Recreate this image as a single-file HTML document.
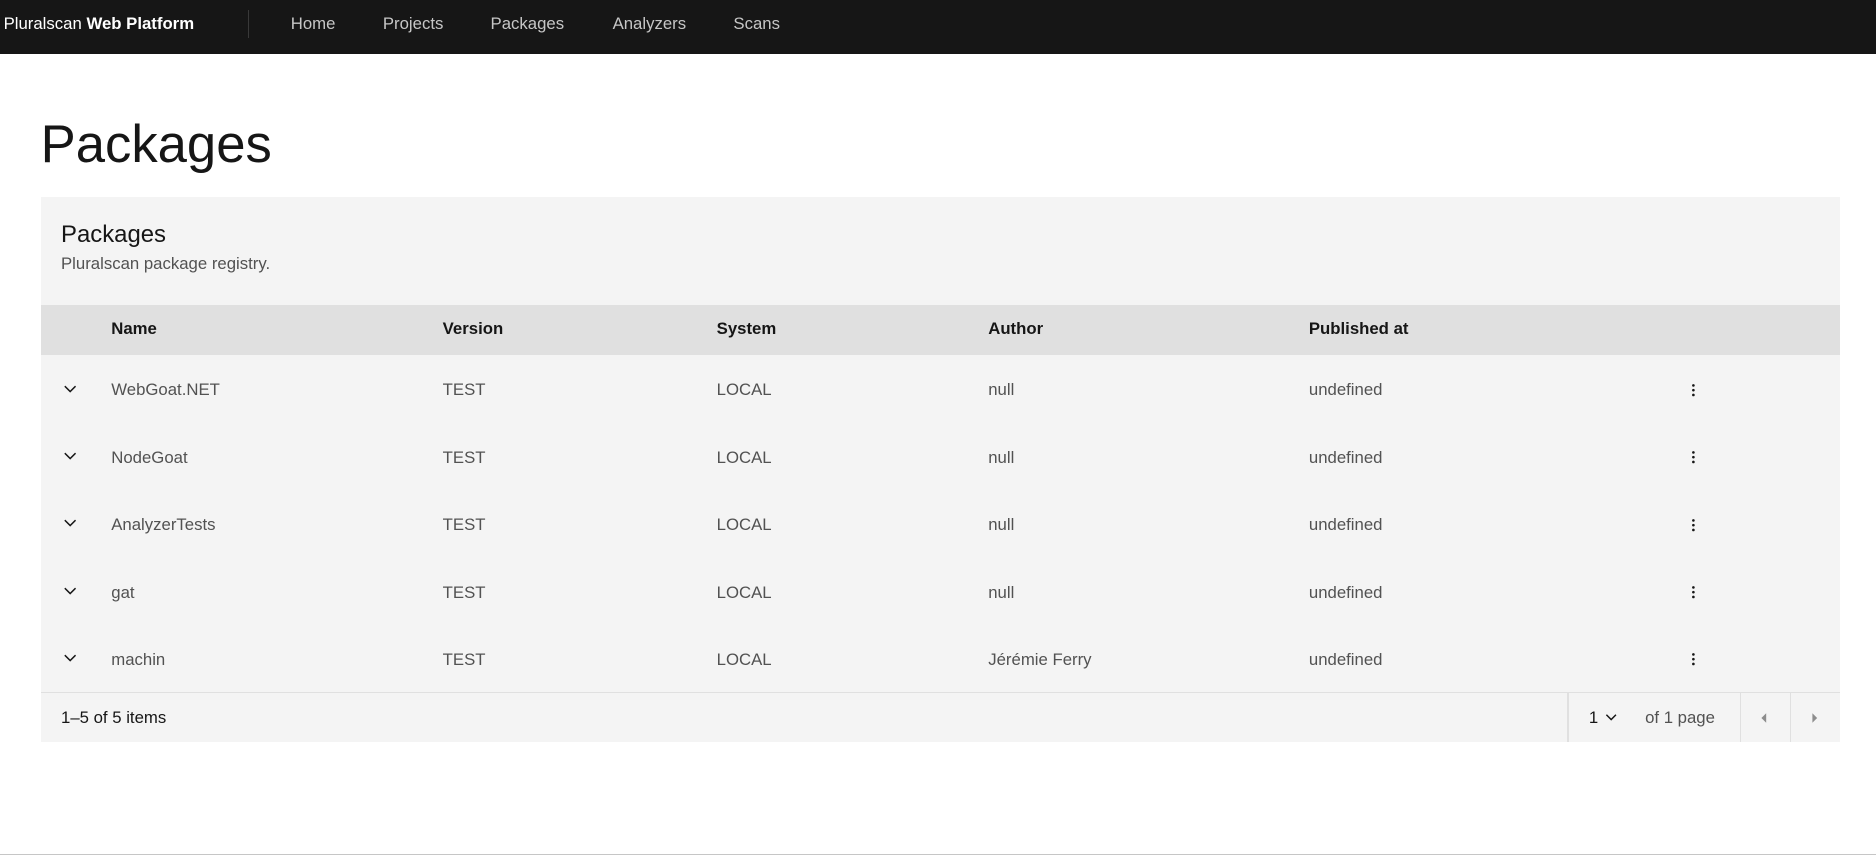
<!DOCTYPE html>
<html><head><meta charset="utf-8"><style>
html,body{margin:0;padding:0;background:#fff;overflow:hidden}
#w{zoom:1.19643;width:1568px;height:716px;position:relative;font-family:"Liberation Sans",Arial,sans-serif;color:#161616}
.nav{position:absolute;left:0;top:0;width:1568px;height:45px;background:#161616}
.nav .b{position:absolute;left:3px;top:12px;font-size:14px;color:#fff}
.nav .d{position:absolute;left:207px;top:8px;width:1px;height:24px;background:#393939}
.nav a{position:absolute;top:12px;font-size:14px;color:#c6c6c6;text-decoration:none}
h1{position:absolute;left:34px;top:95px;margin:0;font-size:44px;font-weight:300;color:#161616}
.c{position:absolute;left:34px;top:165px;width:1504px;height:455px;background:#f4f4f4}
.t{position:absolute;left:17px;top:20px;font-size:20px}
.s{position:absolute;left:17px;top:47px;font-size:14px;color:#525252}
.hd{position:absolute;left:0;top:90px;width:1504px;height:42px;background:#e0e0e0}
.cell{position:absolute;font-size:14px;color:#525252;white-space:nowrap}
.hd .cell{color:#161616;font-weight:bold;top:12px}
.ft{position:absolute;left:0;top:413px;width:1504px;height:42px;border-top:1px solid #e0e0e0;box-sizing:border-box}
.vl{position:absolute;top:0;width:1px;height:41px;background:#e0e0e0}
</style></head><body><div id="w">
<div class="nav"><div class="b">Pluralscan <b>Web Platform</b></div><div class="d"></div>
<a style="left:243px">Home</a><a style="left:320px">Projects</a><a style="left:410px">Packages</a><a style="left:512px">Analyzers</a><a style="left:613px">Scans</a></div>
<h1>Packages</h1>
<div class="c">
<div class="t">Packages</div><div class="s">Pluralscan package registry.</div>
<div class="hd"><div class="cell" style="left:59px">Name</div><div class="cell" style="left:336px">Version</div><div class="cell" style="left:565px">System</div><div class="cell" style="left:792px">Author</div><div class="cell" style="left:1060px">Published at</div></div>
<div id="rows"></div>
<div class="ft">
<div class="cell" style="left:17px;top:13px;color:#161616">1–5 of 5 items</div>
<div class="vl" style="left:1276px"></div><div class="vl" style="left:1420px"></div><div class="vl" style="left:1462px"></div>
<div class="cell" style="left:1294px;top:13px;color:#161616">1</div>
<svg style="position:absolute;left:1307px;top:15px" width="12" height="12" viewBox="0 0 12 12"><path d="M2 4l4 4 4-4" fill="none" stroke="#161616" stroke-width="1.2"/></svg>
<div class="cell" style="left:1341px;top:13px">of 1 page</div>
<svg style="position:absolute;left:1436px;top:16px" width="8" height="10"><path d="M6 1v8L2 5z" fill="#8d8d8d"/></svg>
<svg style="position:absolute;left:1479px;top:16px" width="8" height="10"><path d="M2 1v8l4-4z" fill="#8d8d8d"/></svg>
</div>
</div>
<div style="position:absolute;left:0;top:714px;width:1568px;height:1px;background:#c6c6c6"></div>
</div>
<script>
var d=[["WebGoat.NET","null"],["NodeGoat","null"],["AnalyzerTests","null"],["gat","null"],["machin","Jérémie Ferry"]],h="";
d.forEach(function(r,i){var y=132+i*56.3+21;
h+='<svg style="position:absolute;left:19px;top:'+(y+1)+'px" width="12" height="12" viewBox="0 0 12 12"><path d="M1.5 3.5l4.5 4.5 4.5-4.5" fill="none" stroke="#161616" stroke-width="1.2"/></svg>'+
'<div class="cell" style="left:59px;top:'+y+'px">'+r[0]+'</div><div class="cell" style="left:336px;top:'+y+'px">TEST</div><div class="cell" style="left:565px;top:'+y+'px">LOCAL</div><div class="cell" style="left:792px;top:'+y+'px">'+r[1]+'</div><div class="cell" style="left:1060px;top:'+y+'px">undefined</div>'+
'<svg style="position:absolute;left:1379px;top:'+(y+2)+'px" width="4" height="12"><circle cx="2" cy="2" r="1.1" fill="#161616"/><circle cx="2" cy="6" r="1.1" fill="#161616"/><circle cx="2" cy="10" r="1.1" fill="#161616"/></svg>';});
document.getElementById('rows').innerHTML=h;
</script>
</body></html>
